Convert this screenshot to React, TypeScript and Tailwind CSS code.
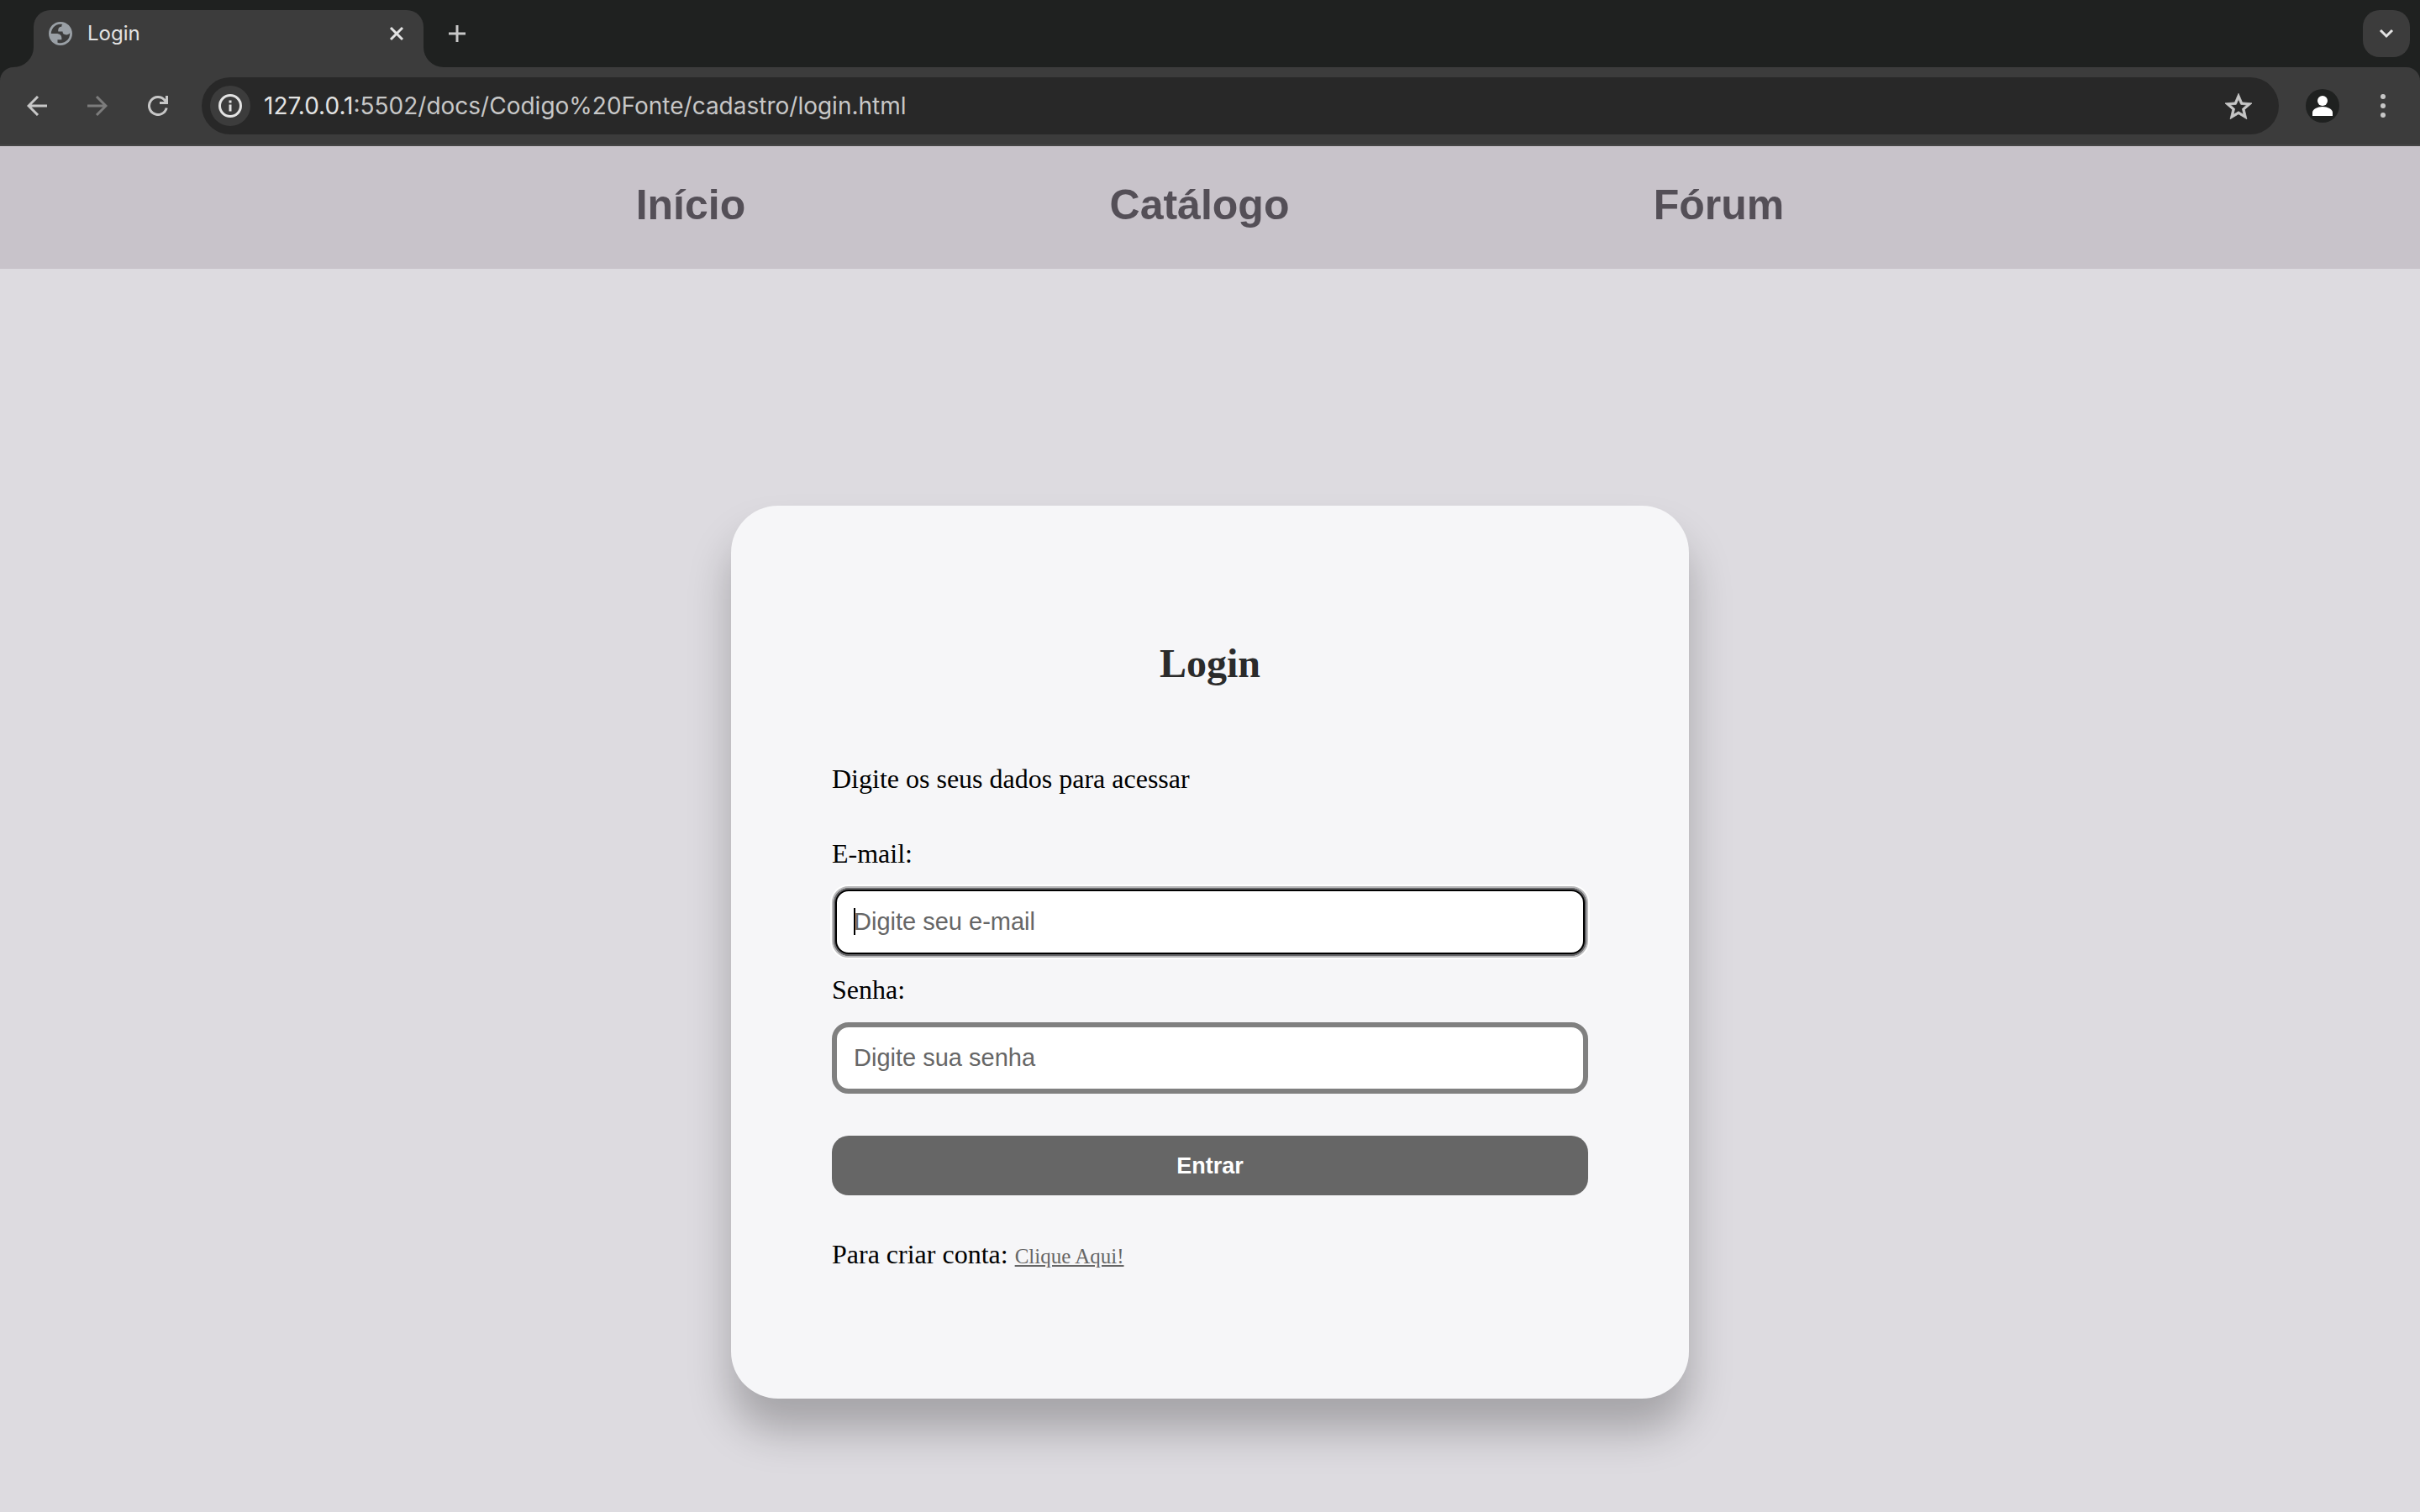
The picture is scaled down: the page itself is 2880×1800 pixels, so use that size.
import React from "react";

function TabFlare({ className }: { className: string }) {
  return (
    <svg viewBox="0 0 24 24" className={`size-6 shrink-0 self-end text-[#3c3c3c] ${className}`} aria-hidden="true">
      <path d="M24 0v24H0A24 24 0 0 0 24 0Z" fill="currentColor" />
    </svg>
  );
}

function Globe() {
  return (
    <svg viewBox="2 2 20 20" className="size-7 shrink-0" fill="#9aa0a6" fillRule="evenodd" aria-hidden="true">
      <path d="M12 2C6.48 2 2 6.48 2 12s4.48 10 10 10 10-4.48 10-10S17.52 2 12 2zM4 12h4.4c3.407.022 4.922 1.73 4.543 5.127H9.488v2.47a8.004 8.004 0 0 0 10.498-8.083C19.327 12.504 18.332 13 17 13c-2.137 0-3.206-.916-3.206-2.75h-3.748c-.274-2.728.683-4.092 2.87-4.092 0-.975.327-1.597.811-1.97A8 8 0 0 0 4 12z" />
    </svg>
  );
}

function TabStrip() {
  return (
    <div className="flex h-20 items-end bg-[#1f2120] pl-4 pr-3">
      <TabFlare className="" />
      <div className="flex h-[68px] w-[464px] items-center rounded-t-[20px] bg-[#3c3c3c] pb-3 pl-[18px] pr-[22px]">
        <Globe />
        <span className="ml-[18px] grow text-2xl text-[#e3e3e3]">Login</span>
        <button type="button" aria-label="Fechar guia">
          <svg viewBox="0 0 20 20" className="size-5" fill="none" stroke="#e3e3e3" strokeWidth="3" aria-hidden="true">
            <path d="M3 3l14 14M17 3L3 17" />
          </svg>
        </button>
      </div>
      <TabFlare className="-scale-x-100" />
      <button type="button" aria-label="Nova guia" className="mb-[30px] ml-[6px]">
        <svg viewBox="0 0 20 20" className="size-5" fill="none" stroke="#c7c7c7" strokeWidth="3" aria-hidden="true">
          <path d="M10 0v20M0 10h20" />
        </svg>
      </button>
      <button type="button" aria-label="Pesquisar guias" className="mb-3 ml-auto flex size-14 items-center justify-center rounded-[20px] bg-[#3c3c3c]">
        <svg viewBox="0 0 18 12" className="h-3 w-[18px]" fill="none" stroke="#e3e3e3" strokeWidth="3" aria-hidden="true">
          <path d="M2 2l7 7 7-7" />
        </svg>
      </button>
    </div>
  );
}

function Toolbar() {
  return (
    <div className="bg-[#1f2120]">
      <div className="flex h-[94px] items-center rounded-t-2xl border-b-2 border-[#464646] bg-[#3c3c3c] pl-8 pr-[41px]">
        <button type="button" aria-label="Voltar" className="shrink-0">
          <svg viewBox="0 0 24 24" className="size-6" fill="none" stroke="#c7c7c7" strokeWidth="3" aria-hidden="true">
            <path d="M24 12H2M13 1L2 12l11 11" />
          </svg>
        </button>
        <button type="button" aria-label="Avançar" className="ml-12 shrink-0">
          <svg viewBox="0 0 24 24" className="size-6" fill="none" stroke="#7c7c7c" strokeWidth="3" aria-hidden="true">
            <path d="M0 12h22M11 1l11 11-11 11" />
          </svg>
        </button>
        <button type="button" aria-label="Recarregar" className="ml-12 shrink-0">
          <svg viewBox="0 0 24 24" className="size-6" fill="none" stroke="#c7c7c7" strokeWidth="3" aria-hidden="true">
            <path d="M22.200 14.500A10.500 10.500 0 1 1 20 5.200l2.500 3.300M22.500 0v8.500H14" />
          </svg>
        </button>
        <div className="ml-10 flex h-[68px] grow items-center rounded-full bg-[#282828] pl-[10px] pr-8">
          <button type="button" aria-label="Informações do site" className="flex size-12 shrink-0 items-center justify-center rounded-full bg-[#3c3c3c]">
            <svg viewBox="0 0 28 28" className="size-7" fill="none" stroke="#e3e3e3" strokeWidth="3" aria-hidden="true">
              <circle cx="14" cy="14" r="12.500" />
              <path d="M14 12.500v8M14 7.500v3" />
            </svg>
          </button>
          <div role="textbox" aria-label="Endereço" className="ml-4 grow text-[28px] leading-9 text-[#c7c7c7]">
            <span className="text-[#e3e3e3]">127.0.0.1</span>:5502/docs/Codigo%20Fonte/cadastro/login.html
          </div>
          <button type="button" aria-label="Adicionar aos favoritos" className="shrink-0">
            <svg viewBox="2 2 20 19" className="h-[31px] w-8" fill="#c7c7c7" stroke="#c7c7c7" strokeWidth="0.5" aria-hidden="true">
              <path d="M22 9.240l-7.190-.620L12 2 9.190 8.630 2 9.240l5.460 4.730L5.820 21 12 17.270 18.180 21l-1.630-7.030L22 9.240zM12 15.400l-3.760 2.270 1-4.280-3.320-2.880 4.380-.380L12 6.100l1.710 4.040 4.380.380-3.320 2.880 1 4.280L12 15.400z" />
            </svg>
          </button>
        </div>
        <button type="button" aria-label="Perfil" className="ml-8 flex size-10 shrink-0 items-center justify-center rounded-full bg-[#1f2120]">
          <svg viewBox="0 0 24 24" className="size-6" fill="#ffffff" aria-hidden="true">
            <circle cx="12" cy="6" r="6" />
            <path d="M0 24v-4c0-4 6-7 12-7s12 3 12 7v4Z" />
          </svg>
        </button>
        <button type="button" aria-label="Menu" className="ml-[49px] shrink-0">
          <svg viewBox="0 0 6 28" className="h-7 w-[6px]" fill="#c7c7c7" aria-hidden="true">
            <circle cx="3" cy="3" r="3" />
            <circle cx="3" cy="14" r="3" />
            <circle cx="3" cy="25" r="3" />
          </svg>
        </button>
      </div>
    </div>
  );
}

const links = ["Início", "Catálogo", "Fórum"];

export default function App() {
  return (
    <div className="flex min-h-screen flex-col bg-[#dddbe0] font-[Liberation_Serif,serif]">
      <header className="font-[Inter,sans-serif]">
        <TabStrip />
        <Toolbar />
      </header>
      <nav className="bg-[#c8c3ca] pb-[46px] pt-10 font-[Liberation_Sans,sans-serif]">
        <ul className="flex justify-around px-[18.75%]">
          {links.map((label) => (
            <li key={label}>
              <a href="#" className="block text-[50px] font-bold leading-[60px] text-[#544f57]">
                {label}
              </a>
            </li>
          ))}
        </ul>
      </nav>
      <main className="flex grow items-center justify-center pb-[136px] pt-[282px]">
        <form className="flex w-[1140px] flex-col rounded-[56px] bg-[#f6f6f8] px-30 pb-[151px] pt-40 text-[32px] leading-9 text-black shadow-[0_38px_50px_rgba(0,0,0,0.25)]">
          <h1 className="text-center text-5xl font-bold leading-[56px] text-[#2b2b2b]">Login</h1>
          <p className="mt-[91px]">Digite os seus dados para acessar</p>
          <label htmlFor="email" className="mt-[53px]">E-mail:</label>
          <div className="relative mt-[21px]">
            <input
              id="email"
              type="email"
              placeholder="Digite seu e-mail"
              className="block h-[85px] w-full rounded-[20px] border-2 border-[#b9b9bb] bg-white px-6 font-[Liberation_Sans,sans-serif] text-[29px] shadow-[0_0_0_2px_#ffffff,inset_0_0_0_2px_#67676a,inset_0_0_0_4px_#000000] outline-none placeholder:text-[#666666]"
            />
            <span className="absolute left-[26px] top-[26px] h-8 w-[2px] bg-black" />
          </div>
          <label htmlFor="senha" className="mt-5">Senha:</label>
          <input
            id="senha"
            type="password"
            placeholder="Digite sua senha"
            className="mt-[21px] block h-[85px] w-full rounded-[20px] border-[6px] border-[#808080] bg-white px-5 font-[Liberation_Sans,sans-serif] text-[29px] outline-none placeholder:text-[#666666]"
          />
          <button type="submit" className="mt-[50px] h-[71px] rounded-[20px] bg-[#666666] font-[Liberation_Sans,sans-serif] text-[27px] font-bold text-white">
            Entrar
          </button>
          <p className="mt-13">
            Para criar conta:{" "}
            <a href="#" className="text-[25px] text-[#666666] underline">Clique Aqui!</a>
          </p>
        </form>
      </main>
    </div>
  );
}
